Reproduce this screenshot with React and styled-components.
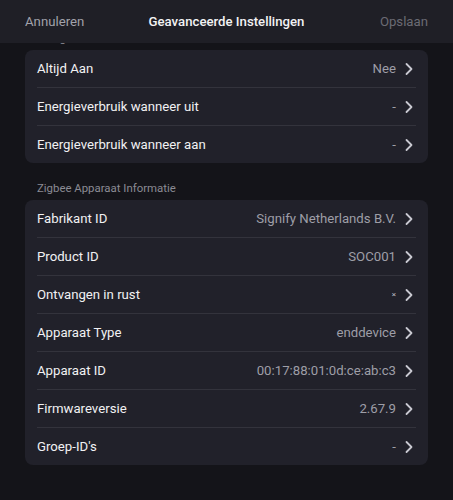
import styled, { createGlobalStyle } from "styled-components"

const GlobalStyle = createGlobalStyle`
  html, body {
    margin: 0;
    padding: 0;
    background: #141419;
  }
  #root {
    min-height: 500px;
  }
`

const Screen = styled.div`
  width: 453px;
  height: 500px;
  overflow: hidden;
  display: flex;
  flex-direction: column;
  background: #141419;
  font-family: Roboto, "Noto Sans", sans-serif;
`

const TopBar = styled.div`
  position: relative;
  z-index: 2;
  flex: 0 0 43px;
  display: grid;
  grid-template-columns: 1fr auto 1fr;
  align-items: center;
  padding: 0 25px;
  background: #1f1f26;
  font-size: 13.2px;
`

const BarButton = styled.span`
  color: ${p => (p.$dim ? "#6b6b74" : "#a2a2ab")};
  justify-self: ${p => (p.$end ? "end" : "start")};
`

const Title = styled.span`
  color: #f2f2f4;
  font-weight: 500;
`

const Content = styled.div`
  display: flex;
  flex-direction: column;
  padding: 0 25px;
  margin-top: -12px;
`

const Section = styled.div`
  display: flex;
  flex-direction: column;
  gap: 4px;
  margin-top: ${p => p.$top || 0}px;
`

const SectionTitle = styled.div`
  padding-left: 12px;
  font-size: 11.4px;
  line-height: 15px;
  color: #8b8b94;
`

const Card = styled.div`
  display: flex;
  flex-direction: column;
  background: #21212a;
  border-radius: 8px;
  padding: 0 12px;
`

const Row = styled.div`
  height: 37px;
  display: flex;
  align-items: center;
  justify-content: space-between;
  & + & {
    border-top: 1px solid #33333c;
  }
`

const Label = styled.span`
  font-size: 13.2px;
  color: #f1f1f3;
`

const Value = styled.span`
  display: flex;
  align-items: center;
  gap: 8px;
  font-size: 13.2px;
  color: #9e9ea7;
`

const Cross = styled.span`
  font-size: 8px;
  color: #b8b8c0;
`

function Chevron() {
  return (
    <svg width="12" height="14" viewBox="0 0 12 14">
      <path d="M2.5 2 L7.5 7 L2.5 12" fill="none" stroke="#c9c9d1" strokeWidth="1.8" strokeLinecap="round" strokeLinejoin="round" />
    </svg>
  )
}

const energy = [
  ["Altijd Aan", "Nee"],
  ["Energieverbruik wanneer uit", "-"],
  ["Energieverbruik wanneer aan", "-"],
]

const zigbee = [
  ["Fabrikant ID", "Signify Netherlands B.V."],
  ["Product ID", "SOC001"],
  ["Ontvangen in rust", "x"],
  ["Apparaat Type", "enddevice"],
  ["Apparaat ID", "00:17:88:01:0d:ce:ab:c3"],
  ["Firmwareversie", "2.67.9"],
  ["Groep-ID's", "-"],
]

function SettingRow({ label, value }) {
  return (
    <Row>
      <Label>{label}</Label>
      <Value>
        {value === "x" ? <Cross>×</Cross> : value}
        <Chevron />
      </Value>
    </Row>
  )
}

function App() {
  return (
    <>
      <GlobalStyle />
      <Screen>
        <TopBar>
          <BarButton>Annuleren</BarButton>
          <Title>Geavanceerde Instellingen</Title>
          <BarButton $dim $end>Opslaan</BarButton>
        </TopBar>
        <Content>
          <Section>
            <SectionTitle>Energie</SectionTitle>
            <Card>
              {energy.map(([l, v]) => <SettingRow key={l} label={l} value={v} />)}
            </Card>
          </Section>
          <Section $top={18}>
            <SectionTitle>Zigbee Apparaat Informatie</SectionTitle>
            <Card>
              {zigbee.map(([l, v]) => <SettingRow key={l} label={l} value={v} />)}
            </Card>
          </Section>
        </Content>
      </Screen>
    </>
  )
}

export default App
